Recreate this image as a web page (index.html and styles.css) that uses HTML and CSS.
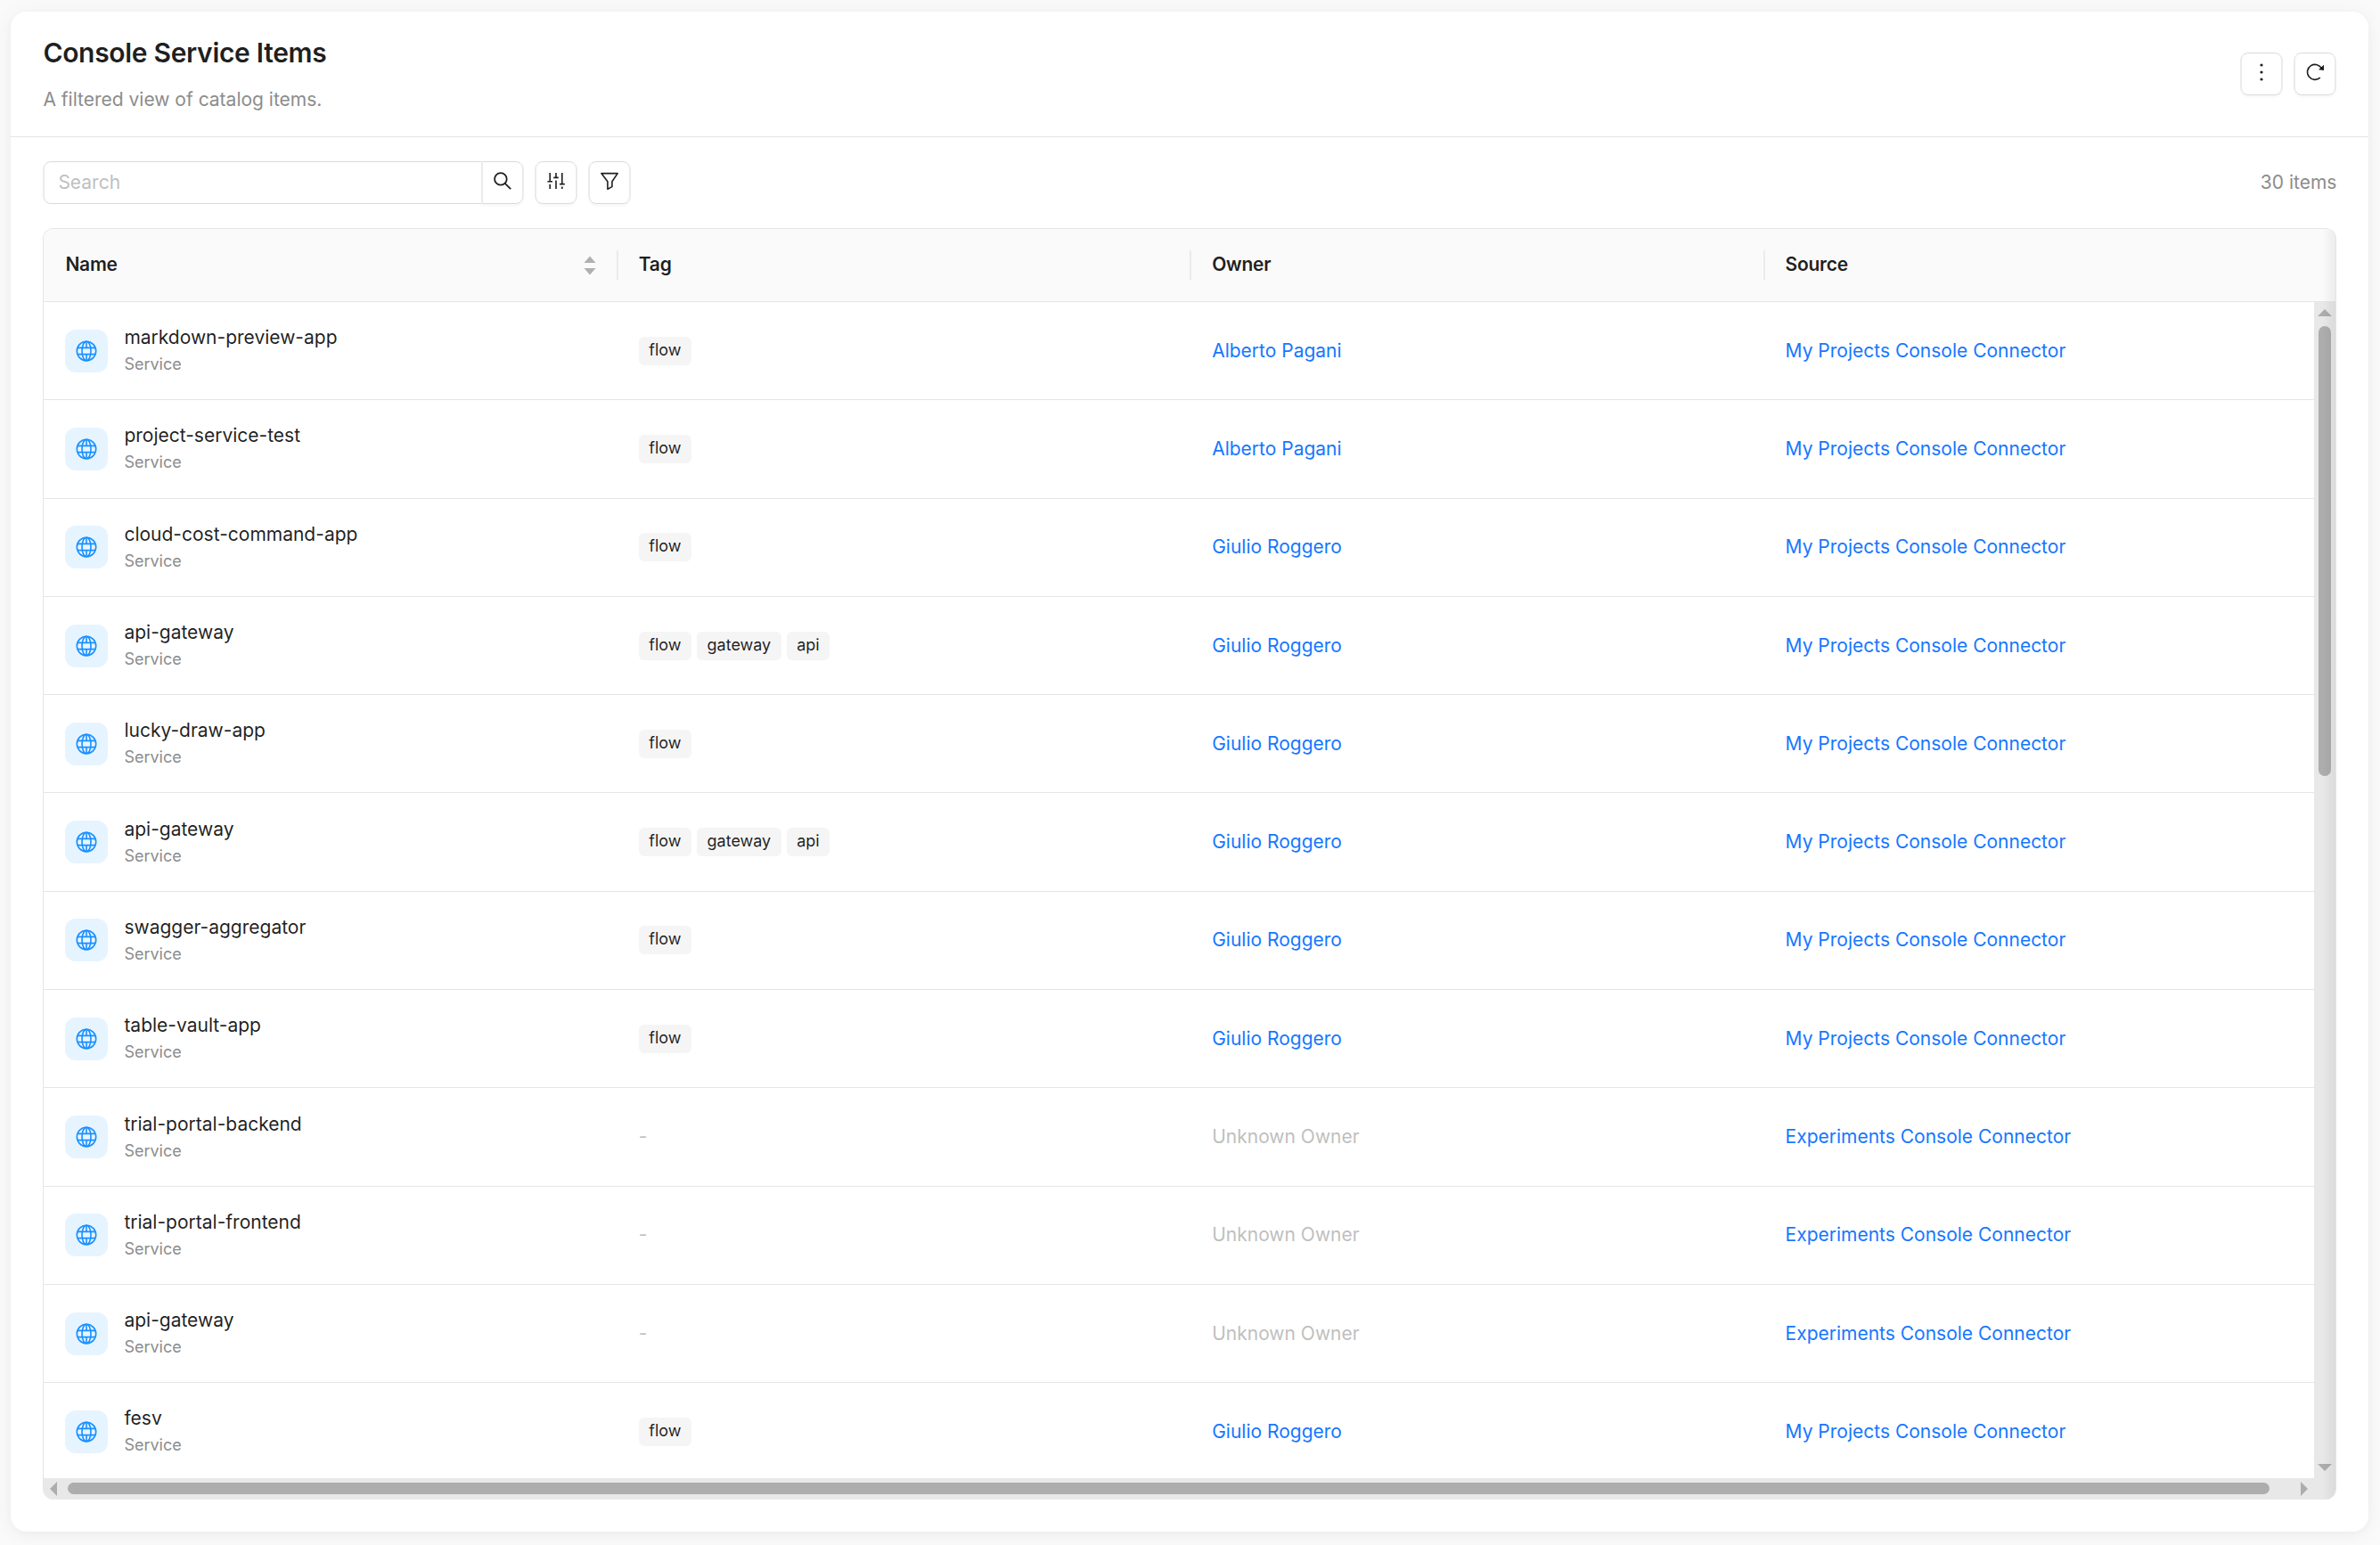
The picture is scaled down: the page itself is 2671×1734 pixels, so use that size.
FILE: index.html
```html
<!DOCTYPE html>
<html lang="en">
<head>
<meta charset="utf-8">
<title>Console Service Items</title>
<link rel="stylesheet" href="styles.css">
</head>
<body>
<svg class="defs" aria-hidden="true">
  <symbol id="globe" viewBox="0 0 24 24"><g fill="none" stroke="currentColor" stroke-width="1.6"><circle cx="12" cy="12" r="10.7"/><ellipse cx="12" cy="12" rx="5" ry="10.7"/><path d="M12 1.3v7.1M12 15.6v7.1M2 8.4h20M2 15.6h20"/></g></symbol>
</svg>
<main class="card">
  <header class="card-header">
    <div>
      <h1 class="title">Console Service Items</h1>
      <p class="subtitle">A filtered view of catalog items.</p>
    </div>
    <div class="actions">
      <button class="btn" aria-label="More"><svg class="icon" viewBox="0 0 20 20" fill="currentColor"><circle cx="10" cy="2" r="1.6"/><circle cx="10" cy="10" r="1.6"/><circle cx="10" cy="18" r="1.6"/></svg></button>
      <button class="btn" aria-label="Refresh"><svg class="icon" viewBox="0 0 20 20" fill="none" stroke="currentColor" stroke-width="1.6"><path d="M15.8 16.1A8.5 8.5 0 1 1 17.6 6"/><path d="M20 1.8v6.1l-6-.6z" fill="currentColor" stroke="none"/></svg></button>
    </div>
  </header>
  <section class="content">
    <div class="toolbar">
      <div class="search">
        <input class="search-input" type="text" placeholder="Search">
        <button class="btn search-btn" aria-label="Search"><svg class="icon" viewBox="0 0 20 20" fill="none" stroke="currentColor" stroke-width="1.8"><circle cx="7.9" cy="7.9" r="6.8"/><path d="M12.8 12.8l6.3 6.3"/></svg></button>
      </div>
      <button class="btn" aria-label="Columns"><svg class="icon" viewBox="0 0 20 20" fill="none" stroke="currentColor" stroke-width="1.6"><path d="M3.2 1v9.8M3.2 13.8V19M.4 10.8H6M10 1v5.4M10 9.4V19M7.2 6.4h5.6M16.8 1v12.6M16.8 16.4V19M14 13.6h5.8"/></svg></button>
      <button class="btn" aria-label="Filter"><svg class="icon" viewBox="0 0 20 20" fill="none" stroke="currentColor" stroke-width="1.6" stroke-linejoin="round"><path d="M.9 1.6h18.2l-6.2 9.2v5.8l-5 2.6v-8.4z"/></svg></button>
      <span class="count">30 items</span>
    </div>
    <div class="table">
      <div class="row head">
        <div class="cell sortable">Name<svg class="sorter" viewBox="0 0 14 22" fill="currentColor"><path d="M7 0.5L13.5 8H.5zM7 21.5L13.5 14H.5z"/></svg></div>
        <div class="cell">Tag</div>
        <div class="cell">Owner</div>
        <div class="cell">Source</div>
      </div>
      <div class="viewport">
        <div class="rows">
          <div class="row"><div class="cell name"><span class="tile"><svg><use href="#globe"/></svg></span><div><div class="item">markdown-preview-app</div><div class="kind">Service</div></div></div><div class="cell tags"><span class="tag">flow</span></div><div class="cell"><a>Alberto Pagani</a></div><div class="cell"><a>My Projects Console Connector</a></div></div>
          <div class="row"><div class="cell name"><span class="tile"><svg><use href="#globe"/></svg></span><div><div class="item">project-service-test</div><div class="kind">Service</div></div></div><div class="cell tags"><span class="tag">flow</span></div><div class="cell"><a>Alberto Pagani</a></div><div class="cell"><a>My Projects Console Connector</a></div></div>
          <div class="row"><div class="cell name"><span class="tile"><svg><use href="#globe"/></svg></span><div><div class="item">cloud-cost-command-app</div><div class="kind">Service</div></div></div><div class="cell tags"><span class="tag">flow</span></div><div class="cell"><a>Giulio Roggero</a></div><div class="cell"><a>My Projects Console Connector</a></div></div>
          <div class="row"><div class="cell name"><span class="tile"><svg><use href="#globe"/></svg></span><div><div class="item">api-gateway</div><div class="kind">Service</div></div></div><div class="cell tags"><span class="tag">flow</span><span class="tag">gateway</span><span class="tag">api</span></div><div class="cell"><a>Giulio Roggero</a></div><div class="cell"><a>My Projects Console Connector</a></div></div>
          <div class="row"><div class="cell name"><span class="tile"><svg><use href="#globe"/></svg></span><div><div class="item">lucky-draw-app</div><div class="kind">Service</div></div></div><div class="cell tags"><span class="tag">flow</span></div><div class="cell"><a>Giulio Roggero</a></div><div class="cell"><a>My Projects Console Connector</a></div></div>
          <div class="row"><div class="cell name"><span class="tile"><svg><use href="#globe"/></svg></span><div><div class="item">api-gateway</div><div class="kind">Service</div></div></div><div class="cell tags"><span class="tag">flow</span><span class="tag">gateway</span><span class="tag">api</span></div><div class="cell"><a>Giulio Roggero</a></div><div class="cell"><a>My Projects Console Connector</a></div></div>
          <div class="row"><div class="cell name"><span class="tile"><svg><use href="#globe"/></svg></span><div><div class="item">swagger-aggregator</div><div class="kind">Service</div></div></div><div class="cell tags"><span class="tag">flow</span></div><div class="cell"><a>Giulio Roggero</a></div><div class="cell"><a>My Projects Console Connector</a></div></div>
          <div class="row"><div class="cell name"><span class="tile"><svg><use href="#globe"/></svg></span><div><div class="item">table-vault-app</div><div class="kind">Service</div></div></div><div class="cell tags"><span class="tag">flow</span></div><div class="cell"><a>Giulio Roggero</a></div><div class="cell"><a>My Projects Console Connector</a></div></div>
          <div class="row"><div class="cell name"><span class="tile"><svg><use href="#globe"/></svg></span><div><div class="item">trial-portal-backend</div><div class="kind">Service</div></div></div><div class="cell muted">-</div><div class="cell muted">Unknown Owner</div><div class="cell"><a>Experiments Console Connector</a></div></div>
          <div class="row"><div class="cell name"><span class="tile"><svg><use href="#globe"/></svg></span><div><div class="item">trial-portal-frontend</div><div class="kind">Service</div></div></div><div class="cell muted">-</div><div class="cell muted">Unknown Owner</div><div class="cell"><a>Experiments Console Connector</a></div></div>
          <div class="row"><div class="cell name"><span class="tile"><svg><use href="#globe"/></svg></span><div><div class="item">api-gateway</div><div class="kind">Service</div></div></div><div class="cell muted">-</div><div class="cell muted">Unknown Owner</div><div class="cell"><a>Experiments Console Connector</a></div></div>
          <div class="row"><div class="cell name"><span class="tile"><svg><use href="#globe"/></svg></span><div><div class="item">fesv</div><div class="kind">Service</div></div></div><div class="cell tags"><span class="tag">flow</span></div><div class="cell"><a>Giulio Roggero</a></div><div class="cell"><a>My Projects Console Connector</a></div></div>
        </div>
        <div class="vbar"><svg viewBox="0 0 16 8"><path d="M8 0l8 8H0z"/></svg><div class="vtrack"><div class="vthumb"></div></div><svg viewBox="0 0 16 8"><path d="M8 8l8-8H0z"/></svg></div>
      </div>
      <div class="hbar"><svg viewBox="0 0 8 16"><path d="M0 8l8 8V0z"/></svg><div class="hthumb"></div><svg viewBox="0 0 8 16"><path d="M8 8L0 16V0z"/></svg></div>
      <div class="edge-shadow"></div>
    </div>
  </section>
</main>
</body>
</html>
```
FILE: styles.css
```css
* { box-sizing: border-box; }
html, body { height: 100%; }
body {
  margin: 0;
  padding: 13px 12.6px 15px 12.4px;
  background: #fafafa;
  font: 21px/33px Inter, sans-serif;
  color: rgba(0, 0, 0, .88);
}
.defs { position: absolute; width: 0; height: 0; }
.card {
  height: 1706px;
  display: flex;
  flex-direction: column;
  background: #fff;
  border-radius: 18px;
  box-shadow: 0 3px 24px rgba(0, 0, 0, .05), 0 2px 8px rgba(0, 0, 0, .03);
}
.card-header {
  height: 141px;
  padding: 0 36px;
  display: flex;
  justify-content: space-between;
  align-items: center;
  border-bottom: 1px solid #e5e5e5;
}
.title { margin: 0 0 15px; font-size: 30px; line-height: 42px; font-weight: 600; letter-spacing: -.32px; }
.subtitle { margin: 0; color: #8c8c8c; }
.actions { display: flex; gap: 12px; }
.btn {
  width: 48px;
  height: 48px;
  padding: 0 0 4px;
  display: flex;
  align-items: center;
  justify-content: center;
  background: #fff;
  border: solid #d9d9d9;
  border-width: 1px 2px;
  border-color: #d9d9d9 #ebebeb;
  border-radius: 9px;
  box-shadow: 0 3px 0 rgba(0, 0, 0, .02);
  color: rgba(0, 0, 0, .88);
}
.icon { width: 20px; height: 20px; }
.content { flex: 1; padding: 27px 36px 36px; display: flex; flex-direction: column; gap: 27px; }
.toolbar { display: flex; gap: 12px; align-items: center; }
.search { display: flex; width: 540px; }
.search-input {
  flex: 1;
  min-width: 0;
  padding: 0 15px 2px;
  background: #fff;
  border: solid #d9d9d9;
  border-width: 1px 0 1px 2px;
  border-left-color: #ebebeb;
  border-radius: 9px 0 0 9px;
  font: inherit;
}
.search-input::placeholder { color: #bfbfbf; }
.search-btn { border-radius: 0 9px 9px 0; }
.count { margin-left: auto; padding-bottom: 2px; color: #8c8c8c; }
.table {
  position: relative;
  height: 1427px;
  display: flex;
  flex-direction: column;
  border: solid #e5e5e5;
  border-width: 1px 1px 0;
  border-radius: 12px;
  overflow: hidden;
}
.row { display: grid; grid-template-columns: repeat(4, 643.4px); height: 110.3px; border-bottom: 1px solid #e5e5e5; }
.cell { padding: 0 24px 1px; display: flex; align-items: center; min-width: 0; }
.head { height: 82px; flex: none; background: #fafafa; font-weight: 600; letter-spacing: -.25px; }
.head .cell { position: relative; padding-bottom: 2px; }
.head .cell + .cell::before {
  content: "";
  position: absolute;
  left: -1px;
  top: 24px;
  width: 2px;
  height: 33px;
  background: #ebebeb;
}
.sortable { justify-content: space-between; }
.sorter { width: 14px; height: 22px; color: #b0b0b0; margin-top: 2px; }
.viewport { flex: 1; min-height: 0; display: flex; }
.rows { flex: 1; min-width: 0; overflow: hidden; }
.name { gap: 18px; padding-bottom: 0; }
.tile {
  width: 48px;
  height: 48px;
  display: flex;
  align-items: center;
  justify-content: center;
  background: #e6f4ff;
  border-radius: 12px;
  color: #1890ff;
}
.tile svg { width: 24px; height: 24px; }
.item { line-height: 33px; }
.kind { margin-bottom: 2px; font-size: 18px; line-height: 28px; color: #8c8c8c; }
.tags { gap: 6px; padding-bottom: 0; }
.tag { padding: 0 11.5px; height: 32px; line-height: 30px; font-size: 18px; background: #f5f5f5; border-radius: 6px; }
.muted { color: #bfbfbf; }
a { color: #1677ff; }
.vbar {
  width: 24px;
  padding: 8px 0;
  display: flex;
  flex-direction: column;
  align-items: center;
  background: #e8e8e8;
}
.vbar svg { width: 16px; height: 8px; fill: #adadad; }
.vtrack { flex: 1; padding-top: 11px; }
.vthumb { width: 14px; height: 505px; border-radius: 7px; background: #adadad; }
.hbar { height: 24px; padding: 0 31px 1px 7px; display: flex; align-items: center; background: #e8e8e8; }
.hbar svg { width: 8px; height: 16px; fill: #adadad; }
.hthumb { width: 2471px; height: 13px; margin: 0 auto 0 12px; border-radius: 7px; background: #adadad; }
.edge-shadow { position: absolute; top: 0; right: 0; bottom: 0; width: 15px; background: linear-gradient(to left, rgba(0, 0, 0, .06), transparent); }
```
